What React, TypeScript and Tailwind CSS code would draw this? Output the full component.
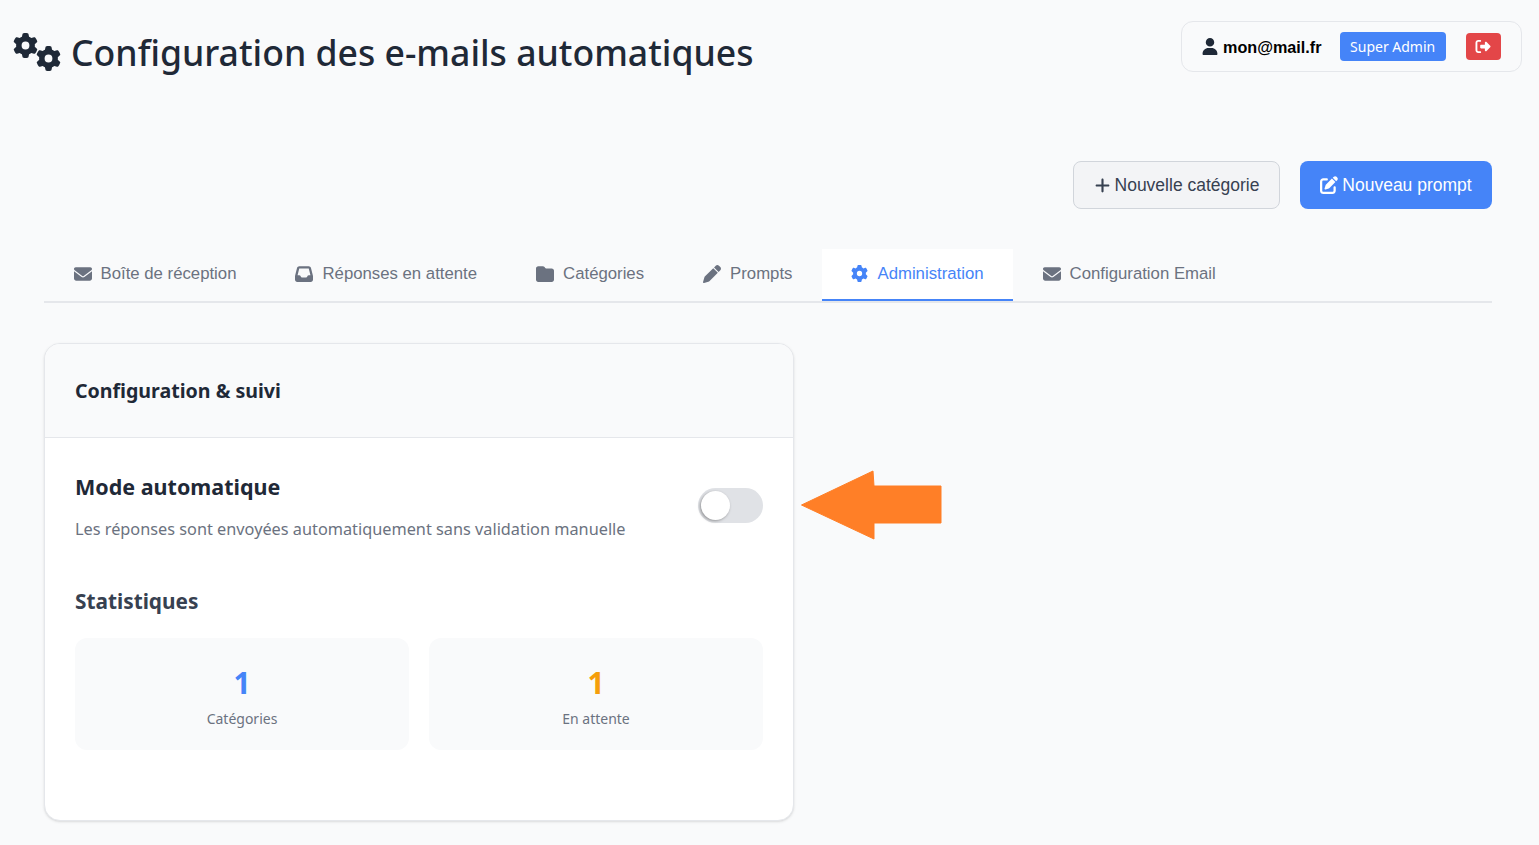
import React from 'react';
import { FaGear, FaUser, FaRightFromBracket, FaPlus, FaPenToSquare, FaEnvelope, FaInbox, FaFolder, FaPen } from 'react-icons/fa6';

const uiFont = { fontFamily: '"Noto Sans", "Open Sans", sans-serif' };

const tabs = [
  { label: 'Boîte de réception', icon: <FaEnvelope className="h-[18px] w-[18px]" /> },
  { label: 'Réponses en attente', icon: <FaInbox className="h-[18px] w-[18px]" /> },
  { label: 'Catégories', icon: <FaFolder className="h-[18px] w-[18px]" /> },
  { label: 'Prompts', icon: <FaPen className="h-[18px] w-[18px]" /> },
  { label: 'Administration', icon: <FaGear className="h-[17px] w-[17px]" />, active: true },
  { label: 'Configuration Email', icon: <FaEnvelope className="h-[18px] w-[18px]" /> },
];

export default function App() {
  return (
    <div className="relative min-h-[845px] bg-[#f9fafb] font-['Liberation_Sans',sans-serif] text-[#1f2937]">
      {/* Header */}
      <header className="flex items-start justify-between pl-[13px] pr-[17px] pt-[21px]">
        <div className="flex items-center gap-[10px]">
          <div className="flex h-[62px] w-[48px] items-start pt-[12px] text-[#1f2937]">
            <FaGear className="h-[25px] w-[25px] shrink-0" />
            <FaGear className="mt-[13px] -ml-[2px] h-[25px] w-[25px] shrink-0" />
          </div>
          <h1 className="text-[35.6px] leading-[62px] font-medium" style={uiFont}>
            Configuration des e-mails automatiques
          </h1>
        </div>
        <div className="flex h-[51px] w-[341px] items-center rounded-[12px] border border-[#e5e7eb] pl-[20px]">
          <FaUser className="h-[17px] w-[16px] text-[#1f2937]" />
          <span className="ml-[5px] text-[16.2px] leading-[24px] font-bold text-black">mon@mail.fr</span>
          <span className="ml-[18px] rounded-[4px] bg-[#4584f8] px-[10.5px] py-[5px] text-[14px] leading-[19px] text-white" style={uiFont}>
            Super Admin
          </span>
          <button className="ml-[20px] flex h-[27px] w-[35px] items-center justify-center rounded-[4px] bg-[#e34648] text-white">
            <FaRightFromBracket className="h-[15px] w-[16px]" />
          </button>
        </div>
      </header>

      {/* Actions */}
      <div className="mt-[78px] flex justify-end gap-[20px] pr-[47px]">
        <button className="flex h-[48px] w-[207px] items-center justify-center gap-[4px] rounded-[8px] border border-[#d1d5db] bg-[#f3f4f6] text-[17.5px] text-[#374151]">
          <FaPlus className="h-[17px] w-[17px]" />
          Nouvelle catégorie
        </button>
        <button className="flex h-[48px] w-[192px] items-center justify-center gap-[4px] rounded-[8px] bg-[#4584f8] text-[17.5px] text-white">
          <FaPenToSquare className="h-[18px] w-[18px]" />
          Nouveau prompt
        </button>
      </div>

      {/* Tabs */}
      <nav className="mt-[40px] mr-[47px] ml-[44px] flex border-b-2 border-[#e5e7eb]">
        {tabs.map((tab) => (
          <div
            key={tab.label}
            className={`flex h-[52px] items-center gap-[9px] border-b-2 px-[29.5px] pb-[1px] text-[16.75px] ${
              tab.active ? 'border-[#4584f8] bg-white text-[#4584f8]' : 'border-transparent text-[#6b7280]'
            }`}
          >
            {tab.icon}
            {tab.label}
          </div>
        ))}
      </nav>

      {/* Card */}
      <section className="mx-[44px] mt-[40px] h-[478px] w-[750px] overflow-hidden rounded-[16px] border border-[#e5e7eb] bg-white shadow-sm" style={uiFont}>
        <div className="flex h-[94px] items-center border-b border-[#e5e7eb] bg-[#f9fafb] px-[30px]">
          <h2 className="text-[19.6px] font-bold text-[#1f2937]">Configuration &amp; suivi</h2>
        </div>
        <div className="px-[30px] pt-[30px]">
          <div className="flex items-center justify-between">
            <div>
              <h3 className="text-[21.5px] leading-[38px] font-bold text-[#1f2937]">Mode automatique</h3>
              <p className="mt-[8px] text-[16.3px] leading-[30px] text-[#6b7280]">
                Les réponses sont envoyées automatiquement sans validation manuelle
              </p>
            </div>
            <div className="-mt-[2px] flex h-[35px] w-[65px] items-center rounded-full bg-[#e0e2e6] p-[3px]">
              <div className="h-[29px] w-[29px] rounded-full bg-white shadow-[-1px_1px_3px_rgba(0,0,0,0.35)]" />
            </div>
          </div>
          <h3 className="mt-[38px] text-[20.8px] leading-[38px] font-bold text-[#374151]">Statistiques</h3>
          <div className="mt-[18px] grid grid-cols-2 gap-[20px]">
            <div className="flex h-[112px] flex-col items-center rounded-[12px] bg-[#f9fafb] pt-[24px]">
              <span className="text-[30px] leading-[41px] font-bold text-[#4584f8]">1</span>
              <span className="mt-[6px] text-[14px] leading-[20px] text-[#6b7280]">Catégories</span>
            </div>
            <div className="flex h-[112px] flex-col items-center rounded-[12px] bg-[#f9fafb] pt-[24px]">
              <span className="text-[30px] leading-[41px] font-bold text-[#f59e0b]">1</span>
              <span className="mt-[6px] text-[14px] leading-[20px] text-[#6b7280]">En attente</span>
            </div>
          </div>
        </div>
      </section>

      {/* Annotation arrow */}
      <svg className="absolute left-[800px] top-[469px]" width="144" height="72" viewBox="0 0 144 72">
        <path
          d="M1.5 36 L73 2 L74 17 L141 17 L141 54 L74 54 L74 70 Z"
          fill="#ff7f27"
          stroke="#ff7f27"
          strokeWidth="1"
          strokeLinejoin="round"
        />
      </svg>
    </div>
  );
}
